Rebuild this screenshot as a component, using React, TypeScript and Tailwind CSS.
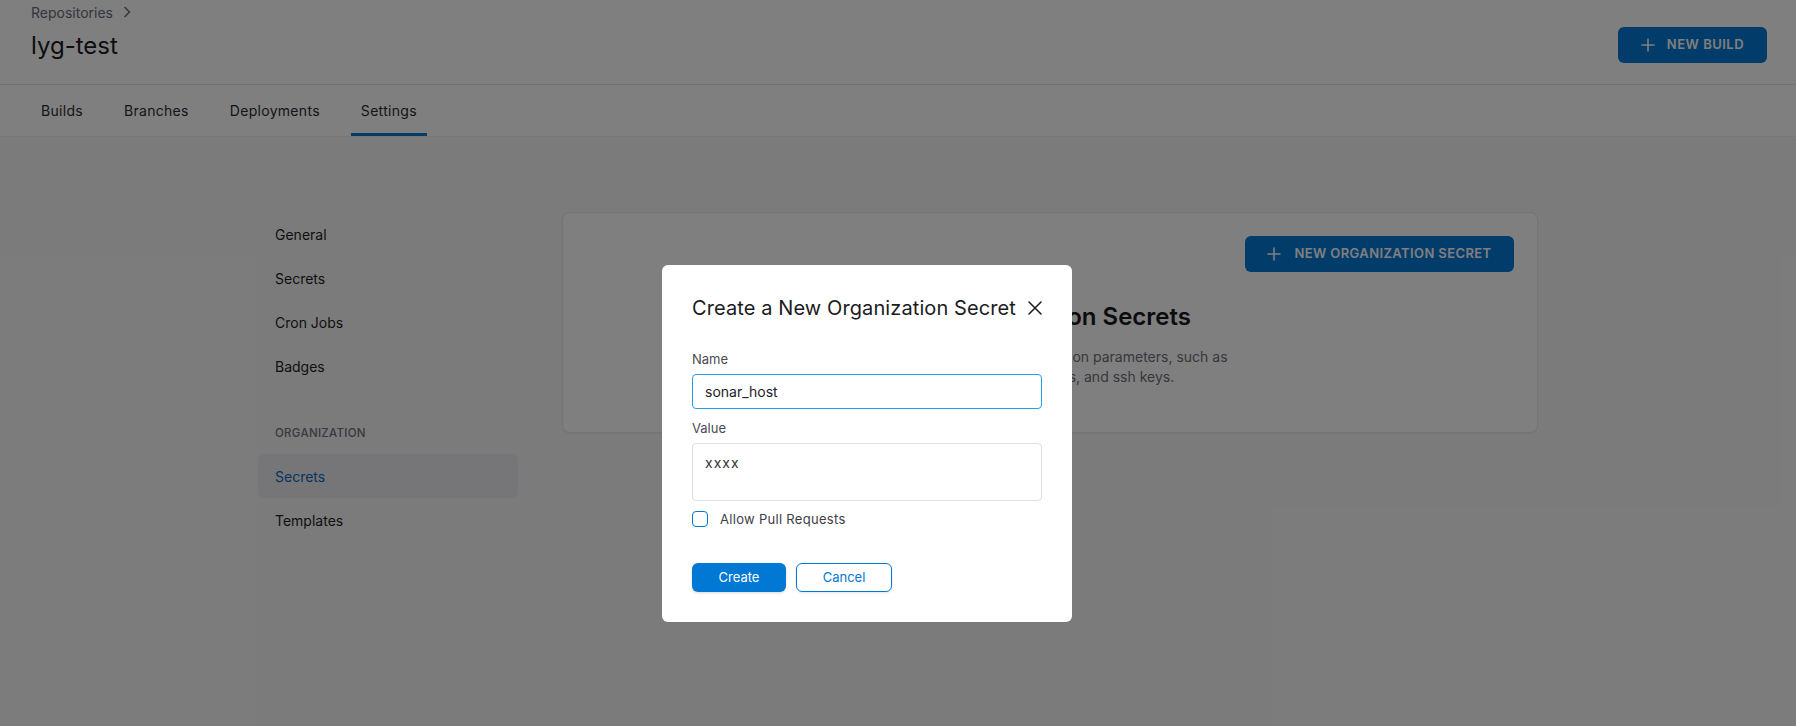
import React from "react";

const Plus = ({ className = "" }: { className?: string }) => (
  <svg className={className} width="14" height="14" viewBox="0 0 14 14" fill="none">
    <path d="M7 1v12M1 7h12" stroke="currentColor" strokeWidth="1.6" strokeLinecap="round" />
  </svg>
);

export default function App() {
  const font = { fontFamily: "Inter, 'Noto Sans', sans-serif" };
  return (
    <div className="relative w-[1796px] h-[726px] overflow-hidden bg-[#f7f7f8]" style={font}>
      {/* Header */}
      <div className="bg-white border-b border-[#e6e6e6] h-[85px] flex items-start justify-between px-[31px]">
        <div className="flex flex-col">
          <div className="flex items-center gap-[10px] h-[24px] text-[14px] text-[#6b6b78]">
            <span>Repositories</span>
            <svg width="8" height="12" viewBox="0 0 8 12" fill="none">
              <path d="M2 1.5L6.5 6L2 10.5" stroke="#6b6b78" strokeWidth="1.5" strokeLinecap="round" strokeLinejoin="round" />
            </svg>
          </div>
          <div className="mt-[6px] text-[24px] leading-[32px] text-[#1b1b22]">lyg-test</div>
        </div>
        <button className="mt-[27px] mr-[-2px] h-[36px] w-[149px] rounded-[6px] bg-[#0278d5] text-white text-[13px] font-semibold tracking-[0.5px] flex items-center justify-center gap-[12px]">
          <Plus className="text-white" />
          NEW BUILD
        </button>
      </div>
      {/* Tabs */}
      <div className="bg-white h-[52px] flex items-stretch gap-[21px] px-[31px] border-b border-[#ededed]">
        {["Builds", "Branches", "Deployments", "Settings"].map((t) => (
          <div
            key={t}
            className={
              t === "Settings"
                ? "px-[10px] flex items-center text-[14px] tracking-[0.3px] text-[#2b2b33] border-b-[3px] border-[#0278d5] pt-[3px]"
                : "px-[10px] flex items-center text-[14px] tracking-[0.3px] text-[#2b2b33] border-b-[3px] border-transparent pt-[3px]"
            }
          >
            {t}
          </div>
        ))}
      </div>
      {/* Body */}
      <div className="w-[1280px] mx-auto pt-[75px] flex gap-[44px]">
        <div className="w-[260px] flex flex-col text-[14px] text-[#1e1e24]">
          {["General", "Secrets", "Cron Jobs", "Badges"].map((s) => (
            <div key={s} className="h-[44px] px-[17px] flex items-center">
              {s}
            </div>
          ))}
          <div className="mt-[22px] h-[44px] px-[17px] pt-[3px] flex items-center text-[11.5px] font-medium tracking-[0.3px] text-[#71717e]">
            ORGANIZATION
          </div>
          <div className="h-[44px] px-[17px] flex items-center rounded-[6px] bg-[#ececf3] text-[#0a6ab8]">Secrets</div>
          <div className="h-[44px] px-[17px] flex items-center">Templates</div>
        </div>
        <div className="w-[976px] h-[221px] bg-white border border-[#e8e8ec] rounded-[8px] shadow-[0_1px_3px_rgba(0,0,0,0.04)] flex flex-col">
          <div className="flex justify-end pt-[23px] pr-[23px]">
            <button className="h-[36px] w-[269px] rounded-[6px] bg-[#0278d5] text-white text-[13px] font-semibold tracking-[0.4px] flex items-center justify-center gap-[13px]">
              <Plus className="text-white" />
              NEW ORGANIZATION SECRET
            </button>
          </div>
          <div className="flex flex-col items-center mt-[29px]">
            <div className="text-[24px] font-semibold leading-[32px] text-[#18181f]">No Organization Secrets</div>
            <div className="mt-[14px] text-[14px] leading-[20px] text-[#6e6e7a] text-center">
              Secrets are private configuration parameters, such as
              <br />
              passwords, API tokens, and ssh keys.
            </div>
          </div>
        </div>
      </div>
      {/* Overlay */}
      <div className="absolute inset-0 bg-black/50" />
      {/* Modal */}
      <div className="absolute left-[662px] top-[265px] w-[410px] h-[357px] bg-white rounded-[6px] px-[30px] pt-[29px] flex flex-col">
        <div className="flex items-center justify-between h-[28px]">
          <div className="text-[20px] tracking-[0.1px] text-[#1b1b22] leading-[28px]">Create a New Organization Secret</div>
          <svg width="14" height="14" viewBox="0 0 14 14" fill="none">
            <path d="M1 1l12 12M13 1L1 13" stroke="#1b1b22" strokeWidth="1.5" strokeLinecap="round" />
          </svg>
        </div>
        <div className="mt-[28px] text-[13px] leading-[18px] text-[#4a4a55]">Name</div>
        <div className="mt-[6px] h-[35px] w-[350px] rounded-[4px] border border-[#1f9ff0] flex items-center px-[12px] text-[14px] text-[#222228]">
          sonar_host
        </div>
        <div className="mt-[10px] text-[13px] leading-[18px] text-[#4a4a55]">Value</div>
        <div className="mt-[6px] h-[58px] w-[350px] rounded-[4px] border border-[#dedee3] px-[12px] pt-[8px] text-[14px] tracking-[1px] text-[#333338]">
          xxxx
        </div>
        <div className="mt-[10px] flex items-center gap-[12px] h-[16px]">
          <div className="w-[16px] h-[16px] rounded-[4px] border border-[#0278d5] bg-white" />
          <span className="text-[13px] tracking-[0.3px] text-[#3d3d47] pt-[1px]">Allow Pull Requests</span>
        </div>
        <div className="mt-[36px] flex gap-[10px]">
          <button className="h-[29px] w-[94px] rounded-[6px] bg-[#0278d5] text-white text-[13px] shadow-[0_1px_3px_rgba(0,0,0,0.15)]">
            Create
          </button>
          <button className="h-[29px] w-[96px] rounded-[6px] bg-white border border-[#0278d5] text-[#0278d5] text-[13px] shadow-[0_1px_3px_rgba(0,0,0,0.1)]">
            Cancel
          </button>
        </div>
      </div>
    </div>
  );
}
